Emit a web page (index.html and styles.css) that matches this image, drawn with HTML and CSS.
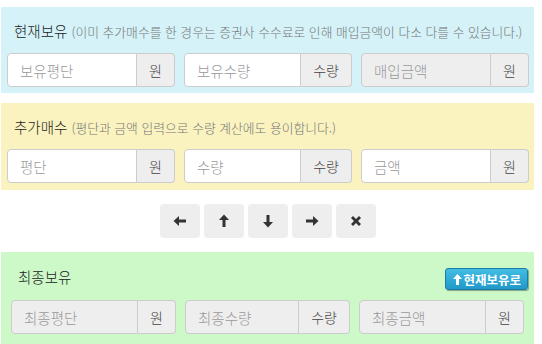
FILE: index.html
```html
<!DOCTYPE html>
<html lang="ko">
<head>
    <meta charset="UTF-8">
    <meta name="viewport" content="width=device-width, initial-scale=1.0">
    <title>물타기 계산기</title>
    <link rel="stylesheet" href="styles.css">
</head>
<body>
<div class="calc">
    <div class="panel panel-hold">
        <h4 class="panel-title">현재보유 <small>(이미 추가매수를 한 경우는 증권사 수수료로 인해 매입금액이 다소 다를 수 있습니다.)</small></h4>
        <div class="fields">
            <div class="field"><input type="text" placeholder="보유평단"><span class="unit">원</span></div>
            <div class="field"><input type="text" placeholder="보유수량"><span class="unit">수량</span></div>
            <div class="field"><input type="text" placeholder="매입금액" disabled><span class="unit">원</span></div>
        </div>
    </div>

    <div class="panel panel-add">
        <h4 class="panel-title">추가매수 <small>(평단과 금액 입력으로 수량 계산에도 용이합니다.)</small></h4>
        <div class="fields">
            <div class="field"><input type="text" placeholder="평단"><span class="unit">원</span></div>
            <div class="field"><input type="text" placeholder="수량"><span class="unit">수량</span></div>
            <div class="field"><input type="text" placeholder="금액"><span class="unit">원</span></div>
        </div>
    </div>

    <div class="arrows">
        <button class="arrow-btn" title="왼쪽">
            <svg width="14" height="14" viewBox="0 0 14 14"><path d="M0.5 7 L6 2 V5.5 H13 V8.5 H6 V12 Z"/></svg>
        </button>
        <button class="arrow-btn" title="위">
            <svg width="14" height="14" viewBox="0 0 14 14"><path d="M7 0.5 L12 6 H8.5 V13 H5.5 V6 H2 Z"/></svg>
        </button>
        <button class="arrow-btn" title="아래">
            <svg width="14" height="14" viewBox="0 0 14 14"><path d="M7 13.5 L12 8 H8.5 V1 H5.5 V8 H2 Z"/></svg>
        </button>
        <button class="arrow-btn" title="오른쪽">
            <svg width="14" height="14" viewBox="0 0 14 14"><path d="M13.5 7 L8 2 V5.5 H1 V8.5 H8 V12 Z"/></svg>
        </button>
        <button class="arrow-btn" title="초기화">
            <svg width="14" height="14" viewBox="0 0 14 14"><path d="M2 4 L4 2 L7 5 L10 2 L12 4 L9 7 L12 10 L10 12 L7 9 L4 12 L2 10 L5 7 Z"/></svg>
        </button>
    </div>

    <div class="panel panel-final">
        <div class="final-head">
            <h4 class="panel-title">최종보유</h4>
            <button class="btn-info">
                <svg width="9" height="11" viewBox="0 0 9 11"><path d="M4.5 0 L9 5 H6 V11 H3 V5 H0 Z"/></svg>현재보유로
            </button>
        </div>
        <div class="fields">
            <div class="field"><input type="text" placeholder="최종평단" disabled><span class="unit">원</span></div>
            <div class="field"><input type="text" placeholder="최종수량" disabled><span class="unit">수량</span></div>
            <div class="field"><input type="text" placeholder="최종금액" disabled><span class="unit">원</span></div>
        </div>
    </div>
</div>
</body>
</html>
```

FILE: styles.css
```css
body {
    margin: 0;
    padding: 7px 0 0 1px;
    font-family: "Noto Sans CJK KR", "Noto Sans", sans-serif;
    font-size: 14px;
    font-weight: 300;
    color: #333;
    background: #fff;
}

.calc {
    width: 533px;
}

.panel {
    padding: 13px 5px 6px 6px;
}

.panel-hold {
    background-color: #d4f2f8;
}

.panel-add {
    margin-top: 10px;
    background-color: #faf3c0;
    padding-bottom: 7px;
}

.panel-final {
    background-color: #cdf9c9;
    padding: 14px 6px 10px 10px;
}

.panel-title {
    height: 21px;
    margin: 0 0 12px 7px;
    font-size: 14.5px;
    font-weight: 300;
    line-height: 21px;
    color: #222;
    white-space: nowrap;
}

.panel-title small {
    font-size: 12.8px;
    font-weight: 300;
    line-height: 1;
    color: #777;
}

.fields {
    display: grid;
    grid-template-columns: repeat(3, minmax(0, 1fr));
    gap: 9px;
}

.panel-final .fields {
    margin-right: 4px;
}

.field {
    display: flex;
    min-width: 0;
    height: 34px;
}

.field input {
    flex: 1;
    width: 0;
    min-width: 0;
    box-sizing: border-box;
    height: 34px;
    padding: 6px 12px;
    border: 1px solid #ccc;
    border-radius: 4px 0 0 4px;
    background: #fff;
    font-family: inherit;
    font-size: 14.5px;
    font-weight: 300;
    color: #555;
    outline: none;
}

.field input::placeholder {
    color: #999;
}

.field input:disabled {
    background: #eee;
}

.unit {
    display: flex;
    align-items: center;
    justify-content: center;
    padding: 0 12px;
    background: #eee;
    border: 1px solid #ccc;
    border-left: 0;
    border-radius: 0 4px 4px 0;
    color: #444;
    font-size: 14px;
    font-weight: 300;
}

.arrows {
    display: flex;
    justify-content: center;
    gap: 4px;
    margin: 14px 0;
}

.arrow-btn {
    width: 40px;
    height: 34px;
    border: 0;
    border-radius: 4px;
    background: #eee;
    display: flex;
    align-items: center;
    justify-content: center;
    padding: 0;
}

.arrow-btn svg {
    fill: #333;
}

.final-head {
    display: flex;
    justify-content: space-between;
    align-items: flex-start;
    margin-bottom: 10px;
}

.final-head .panel-title {
    margin: 0 0 0 7px;
}

.btn-info {
    display: flex;
    align-items: center;
    gap: 1px;
    height: 22px;
    margin-top: 2px;
    padding: 0 6px 0 7px;
    border: 1px solid #1b7ca4;
    border-radius: 3px;
    background: linear-gradient(to bottom, #43bde3, #2199c9);
    box-shadow: 1px 1px 1px rgba(0, 0, 0, 0.35);
    color: #fff;
    font-family: inherit;
    font-size: 12.5px;
    font-weight: bold;
}

.btn-info svg {
    fill: #fff;
}
```
